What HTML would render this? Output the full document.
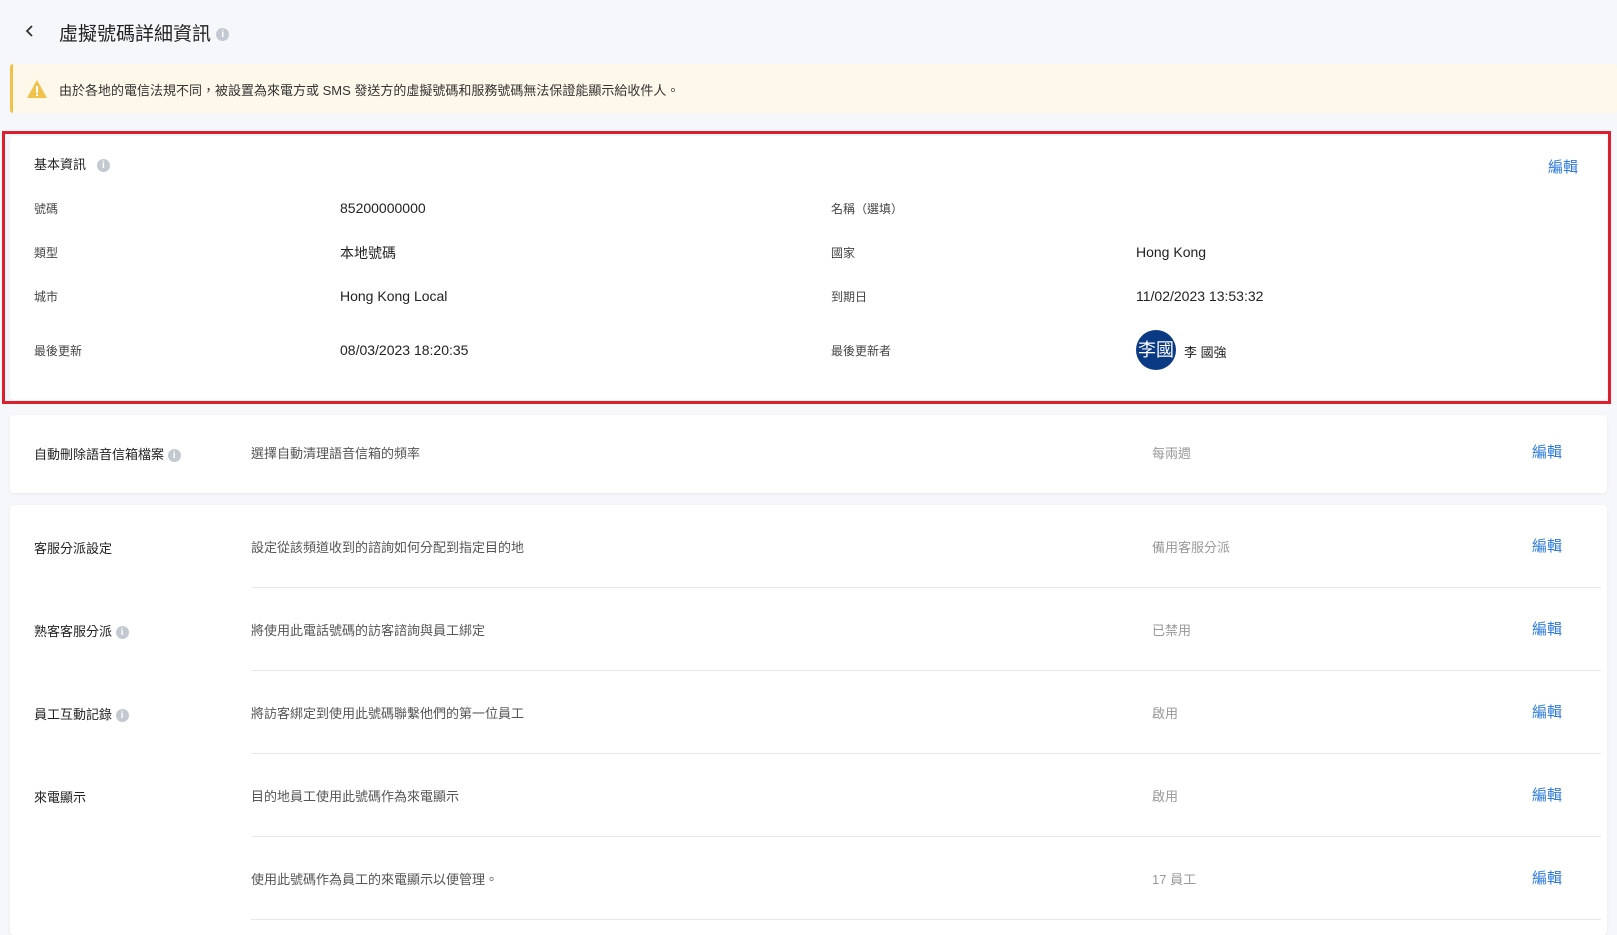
<!DOCTYPE html>
<html><head><meta charset="utf-8"><style>
*{box-sizing:border-box;margin:0;padding:0}
body{width:1617px;height:922px;overflow:hidden;background:#f6f7fa;font-family:"Liberation Sans","Noto Sans CJK TC",sans-serif;color:#222;position:relative}
.a{position:absolute;white-space:nowrap}
.info{display:inline-block;width:13px;height:13px;border-radius:50%;background:#c3c9d1;color:#fff;font-size:10px;line-height:13px;text-align:center;font-weight:bold;vertical-align:middle}
.card{position:absolute;background:#fff;border-radius:4px;box-shadow:0 1px 3px rgba(0,0,0,.06)}
.lbl{font-size:12px;color:#444}
.val{font-size:14px;color:#222}
.edit{font-size:15px;color:#2d7be0}
.desc{font-size:13px;color:#555}
.st{font-size:13px;color:#999}
.sep{position:absolute;left:251px;width:1350px;height:1px;background:#e6e8eb}
</style></head><body>
<svg class="a" style="left:25px;top:24px" width="10" height="14" viewBox="0 0 10 14"><path d="M7 2 L2 7 L7 12" stroke="#333" stroke-width="1.8" fill="none"/></svg>
<div class="a" style="left:59px;top:19px;font-size:19px;color:#222">虛擬號碼詳細資訊 <span class="info">i</span></div>
<div class="a" style="left:10px;top:64px;width:1607px;height:49px;background:#fdf8ea;border-left:3px solid #f1c24b;border-radius:3px"></div>
<svg class="a" style="left:26px;top:79px" width="22" height="20" viewBox="0 0 22 20"><path d="M11 1 L21 19 L1 19 Z" fill="#f1c24b"/><rect x="10" y="7" width="2" height="7" fill="#fff"/><rect x="10" y="15" width="2" height="2" fill="#fff"/></svg>
<div class="a" style="left:59px;top:80px;font-size:13px;color:#333">由於各地的電信法規不同，被設置為來電方或 SMS 發送方的虛擬號碼和服務號碼無法保證能顯示給收件人。</div>

<div class="card" style="left:10px;top:136px;width:1597px;height:264px"></div>
<div class="a" style="left:2px;top:131px;width:1609px;height:273px;border:3px solid #d9202c"></div>
<div class="a" style="left:34px;top:154px;font-size:13px">基本資訊 &nbsp; <span class="info">i</span></div>
<div class="a edit" style="left:1548px;top:156px">編輯</div>
<div class="a lbl" style="left:34px;top:200px">號碼</div><div class="a val" style="left:340px;top:200px">85200000000</div>
<div class="a lbl" style="left:831px;top:200px">名稱（選填）</div>
<div class="a lbl" style="left:34px;top:244px">類型</div><div class="a val" style="left:340px;top:243px">本地號碼</div>
<div class="a lbl" style="left:831px;top:244px">國家</div><div class="a val" style="left:1136px;top:244px">Hong Kong</div>
<div class="a lbl" style="left:34px;top:288px">城市</div><div class="a val" style="left:340px;top:288px">Hong Kong Local</div>
<div class="a lbl" style="left:831px;top:288px">到期日</div><div class="a val" style="left:1136px;top:288px">11/02/2023 13:53:32</div>
<div class="a lbl" style="left:34px;top:342px">最後更新</div><div class="a val" style="left:340px;top:342px">08/03/2023 18:20:35</div>
<div class="a lbl" style="left:831px;top:342px">最後更新者</div>
<div class="a" style="left:1136px;top:330px;width:40px;height:40px;border-radius:50%;background:#0a3a84;color:#fff;font-size:18px;line-height:40px;text-align:center;overflow:hidden">李國</div>
<div class="a" style="left:1184px;top:342px;font-size:13px">李 國強</div>

<div class="card" style="left:10px;top:415px;width:1597px;height:78px"></div>
<div class="a" style="left:34px;top:444px;font-size:13px">自動刪除語音信箱檔案 <span class="info">i</span></div>
<div class="a desc" style="left:251px;top:443px">選擇自動清理語音信箱的頻率</div>
<div class="a st" style="left:1152px;top:443px">每兩週</div>
<div class="a edit" style="left:1532px;top:441px">編輯</div>

<div class="card" style="left:10px;top:505px;width:1597px;height:430px"></div>
<div class="a" style="left:34px;top:538px;font-size:13px">客服分派設定</div>
<div class="a desc" style="left:251px;top:537px">設定從該頻道收到的諮詢如何分配到指定目的地</div>
<div class="a st" style="left:1152px;top:537px">備用客服分派</div>
<div class="a edit" style="left:1532px;top:535px">編輯</div>
<div class="sep" style="top:587px"></div>
<div class="a" style="left:34px;top:621px;font-size:13px">熟客客服分派 <span class="info">i</span></div>
<div class="a desc" style="left:251px;top:620px">將使用此電話號碼的訪客諮詢與員工綁定</div>
<div class="a st" style="left:1152px;top:620px">已禁用</div>
<div class="a edit" style="left:1532px;top:618px">編輯</div>
<div class="sep" style="top:670px"></div>
<div class="a" style="left:34px;top:704px;font-size:13px">員工互動記錄 <span class="info">i</span></div>
<div class="a desc" style="left:251px;top:703px">將訪客綁定到使用此號碼聯繫他們的第一位員工</div>
<div class="a st" style="left:1152px;top:703px">啟用</div>
<div class="a edit" style="left:1532px;top:701px">編輯</div>
<div class="sep" style="top:753px"></div>
<div class="a" style="left:34px;top:787px;font-size:13px">來電顯示</div>
<div class="a desc" style="left:251px;top:786px">目的地員工使用此號碼作為來電顯示</div>
<div class="a st" style="left:1152px;top:786px">啟用</div>
<div class="a edit" style="left:1532px;top:784px">編輯</div>
<div class="sep" style="top:836px"></div>
<div class="a desc" style="left:251px;top:869px">使用此號碼作為員工的來電顯示以便管理。</div>
<div class="a st" style="left:1152px;top:869px">17 員工</div>
<div class="a edit" style="left:1532px;top:867px">編輯</div>
<div class="sep" style="top:919px"></div>
</body></html>
